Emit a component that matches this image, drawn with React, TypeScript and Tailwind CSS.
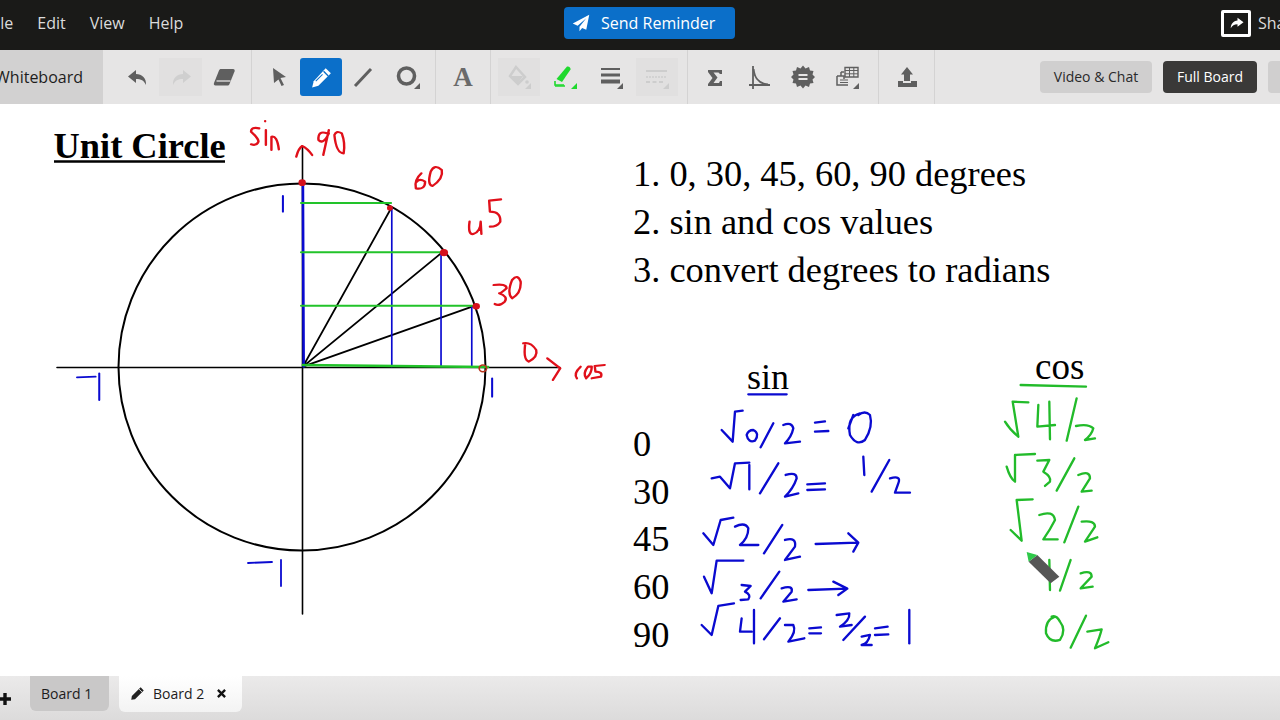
import type { ReactNode } from "react";

const GREY = "#5f5f5f";
const SERIF = "font-['Liberation_Serif',serif]";

function Corner({ color = GREY }: { color?: string }) {
  return <path d="M24 18 L24 24 L18 24 Z" fill={color} />;
}

function Tool({ children, className = "" }: { children: ReactNode; className?: string }) {
  return (
    <div className={`flex h-[38px] shrink-0 items-center justify-center ${className}`}>
      <svg viewBox="0 0 24 24" className="h-6 w-6">
        {children}
      </svg>
    </div>
  );
}

function Toolbar() {
  return (
    <div className="flex h-[54px] shrink-0 items-stretch bg-[#e6e5e5] font-['Open_Sans',sans-serif]">
      <div className="flex w-[103px] shrink-0 items-center justify-end bg-[#d2d1d1] pr-5 text-[16px] text-[#1d1d1d]">
        Whiteboard
      </div>

      <div className="flex w-[148px] shrink-0 items-center pl-[13px]">
        <Tool className="w-[43px]">
          <path d="M10 5 L2 11.5 L10 18 V14 C15 14 18 15.5 20 20 C20.5 13 16 9 10 9 Z" fill={GREY} />
        </Tool>
        <Tool className="w-[43px] bg-[#e1e0e0]">
          <path d="M14 5 L22 11.5 L14 18 V14 C9 14 6 15.5 4 20 C3.5 13 8 9 14 9 Z" fill="#cfcfcf" />
        </Tool>
        <Tool className="w-[43px]">
          <path d="M9 4 H21 C22.5 4 23 5 22.5 6.5 L17.5 19 C17 20 16.5 20.5 15 20.5 H3.5 C2 20.5 1.5 19.5 2 18 L7 5.5 C7.5 4.5 8 4 9 4 Z" fill={GREY} />
          <path d="M4.5 16 H18.5" stroke="#e6e5e5" strokeWidth="1.3" />
        </Tool>
      </div>

      <div className="flex w-[184px] shrink-0 items-center border-l border-[#d4d3d3] pl-[6px]">
        <Tool className="w-[42px]">
          <path d="M6 3 L19 12 L13.5 13 L17 20 L14.5 21 L11.5 14.5 L7 18 Z" fill={GREY} />
        </Tool>
        <div className="flex h-[38px] w-[42px] shrink-0 items-center justify-center rounded-[3px] bg-[#0b6fc9]">
          <svg viewBox="0 0 24 24" className="h-[25px] w-[25px]">
            <path d="M16 3 L21 8 L9 20 L3 21.5 L4.5 15.5 Z" fill="#fff" />
            <path d="M14 6 L18.5 10.5" stroke="#0b6fc9" strokeWidth="1.3" />
            <path d="M6.5 15.5 L13 9" stroke="#0b6fc9" strokeWidth="1" />
          </svg>
        </div>
        <Tool className="w-[42px]">
          <path d="M4 21 L20 4" stroke={GREY} strokeWidth="3" />
        </Tool>
        <Tool className="ml-[3px] w-[42px]">
          <circle cx="10.5" cy="11" r="8" fill="none" stroke={GREY} strokeWidth="3.6" />
          <Corner />
        </Tool>
      </div>

      <div className={`flex w-[55px] shrink-0 items-center justify-center border-l border-[#d4d3d3] ${SERIF} text-[27px] font-bold text-[#6a6a6a]`}>
        A
      </div>

      <div className="flex w-[197px] shrink-0 items-center gap-[4px] border-l border-[#d4d3d3] pl-[7px]">
        <Tool className="w-[42px] bg-[#e1e0e0]">
          <path d="M9 2 L18 12 L11 19 L3 11 Z" fill="none" stroke="#cdcdcd" strokeWidth="2.5" />
          <path d="M4 11 H16 L11 18 Z" fill="#cdcdcd" />
          <circle cx="20" cy="17" r="1.8" fill="#cdcdcd" />
          <Corner color="#cdcdcd" />
        </Tool>
        <Tool className="w-[42px]">
          <path d="M14 1.5 C16 1 18 2.5 17.5 4.5 L9 17 L3.5 14 Z" fill="#1fd92e" />
          <path d="M2 16 V20 H11" fill="none" stroke="#1fd92e" strokeWidth="1.6" />
          <path d="M2 21 H12" stroke="#1fd92e" strokeWidth="1.5" />
          <Corner color="#1fd92e" />
        </Tool>
        <Tool className="w-[42px]">
          <path d="M2 4 H21" stroke={GREY} strokeWidth="2" />
          <path d="M2 10 H21" stroke={GREY} strokeWidth="3" />
          <path d="M2 16.5 H21" stroke={GREY} strokeWidth="4" />
          <Corner />
        </Tool>
        <Tool className="w-[42px] bg-[#e1e0e0]">
          <path d="M1 6 H22" stroke="#cdcdcd" strokeWidth="2" />
          <path d="M1 12 H22" stroke="#cdcdcd" strokeWidth="1.3" strokeDasharray="2 1" />
          <path d="M1 17 H18" stroke="#cdcdcd" strokeWidth="2" strokeDasharray="4 2.5" />
          <Corner color="#cdcdcd" />
        </Tool>
      </div>

      <div className="flex w-[191px] shrink-0 items-center border-l border-[#d4d3d3] pl-[5px]">
        <Tool className="w-[44px]">
          <path d="M5 5 H19 V9 H17 L15.5 7.5 H10.5 L14.5 12.5 L10.5 18 H16 L17 16 H19 V21 H5 V19 L9.5 13 L5 7 Z" fill={GREY} />
        </Tool>
        <Tool className="w-[44px]">
          <path d="M6 1 V24 M2 20 H23" stroke={GREY} strokeWidth="1.8" fill="none" />
          <path d="M6.5 4 C7.5 13 11 18.5 21 19.5" stroke={GREY} strokeWidth="2" fill="none" />
        </Tool>
        <Tool className="w-[44px]">
          <path
            d="M12 0.5 L14.5 3.5 L18 2 L19 5.5 L22.5 6 L21.5 9.5 L24 12 L21.5 14.5 L22.5 18 L19 18.5 L18 22 L14.5 20.5 L12 23.5 L9.5 20.5 L6 22 L5 18.5 L1.5 18 L2.5 14.5 L0 12 L2.5 9.5 L1.5 6 L5 5.5 L6 2 L9.5 3.5 Z"
            fill={GREY}
          />
          <path d="M7.5 10 H16.5 M7.5 14 H16.5" stroke="#e6e5e5" strokeWidth="2" />
        </Tool>
        <Tool className="w-[44px]">
          <path d="M10 2.5 H23 V12 H10 Z" fill="none" stroke={GREY} strokeWidth="1.4" />
          <path d="M10 5.5 H23 M10 8.8 H23 M14.5 2.5 V12 M18.8 2.5 V12" stroke={GREY} strokeWidth="1" />
          <path d="M6 7 H9 M6 7 V11 M2 11 H9 V14 M2 11 V20 H13" fill="none" stroke={GREY} strokeWidth="1.5" />
          <path d="M5 15 H13 M5 17.5 H13" stroke={GREY} strokeWidth="1" />
          <Corner />
        </Tool>
      </div>

      <div className="flex w-[57px] shrink-0 items-center justify-center border-x border-[#d4d3d3]">
        <svg viewBox="0 0 24 24" className="h-6 w-6">
          <path d="M12 2 L18 9.5 H15 V16 H9 V9.5 H6 Z" fill={GREY} />
          <path d="M3 16 H8 V18 H16 V16 H22 V22 H3 Z" fill={GREY} />
        </svg>
      </div>

      <div className="ml-[105px] flex shrink-0 items-center gap-[11px] pb-[1px] text-[14px]">
        <div className="flex h-[32px] w-[112px] items-center justify-center rounded-[4px] bg-[#d0cfcf] text-[#2a2a2a]">
          Video &amp; Chat
        </div>
        <div className="flex h-[32px] w-[94px] items-center justify-center rounded-[4px] bg-[#3a3938] text-white">
          Full Board
        </div>
        <div className="h-[32px] w-[40px] rounded-[4px] bg-[#d0cfcf]" />
      </div>
    </div>
  );
}

function Diagram() {
  return (
    <svg viewBox="0 104 1280 572" className="absolute inset-0 h-full w-full" fill="none" strokeLinecap="round" strokeLinejoin="round">
      <path d="M54 161.5 H225" stroke="#000" strokeWidth="2.6" strokeLinecap="butt" />
      <circle cx="302" cy="367" r="183.5" stroke="#000" strokeWidth="2" />
      <path d="M57 367.5 H560 M302.5 147 V614" stroke="#000" strokeWidth="1.6" />

      {/* top half, drawn in the crop's coordinates */}
      <g transform="translate(40 110) scale(0.3703 0.3333)">
        <path d="M710 770 L948 295 M710 770 L1085 428 M710 770 L1167 590" stroke="#000" strokeWidth="5" />
        <g stroke="#0a0ad0">
          <path d="M710 225 L712 770" strokeWidth="7" />
          <path d="M950 295 V770 M1083 430 V770 M1166 590 V770" strokeWidth="4.5" />
          <path d="M656 258 V305 M100 802 L150 800 M160 790 V870 M1221 805 V860" strokeWidth="5.5" />
        </g>
        <g stroke="#22c32a">
          <path d="M705 279 H948 M705 427 H1083 M705 587 H1167" strokeWidth="6" />
          <path d="M710 765 L1210 771" strokeWidth="7" />
        </g>
        <g fill="#d6101c">
          <circle cx="708" cy="218" r="10" />
          <circle cx="945" cy="294" r="8" />
          <circle cx="1091" cy="428" r="11" />
          <circle cx="1178" cy="589" r="10" />
        </g>
        <circle cx="1196" cy="775" r="10" stroke="#b8341c" strokeWidth="4.5" />
        <g stroke="#e0101a" strokeWidth="6.5">
          <path d="M592 55 Q570 50 570 65 Q590 85 590 95 Q585 108 570 103" />
          <path d="M610 60 V105 M608 33 V34" />
          <path d="M625 120 V80 Q640 75 645 118" />
          <path d="M692 140 Q698 115 708 108 Q722 115 735 135" />
          <path d="M775 70 Q750 60 752 90 Q765 105 780 70 M780 60 L765 135" />
          <path d="M795 75 Q800 130 820 130 Q825 100 815 70 Q800 60 795 75" />
          <path d="M1030 190 Q1010 210 1015 235 Q1040 240 1040 215 Q1025 205 1018 215" />
          <path d="M1055 185 Q1045 225 1060 228 Q1090 205 1085 180 Q1065 160 1055 185" />
          <path d="M1160 335 Q1155 375 1170 372 Q1190 365 1190 335 L1192 372" />
          <path d="M1245 268 L1213 272 L1215 305 Q1245 305 1243 335 Q1235 350 1215 350" />
          <path d="M1225 525 Q1260 520 1260 535 Q1245 550 1240 550 Q1265 560 1255 575 Q1240 590 1228 582" />
          <path d="M1275 510 Q1260 550 1275 565 Q1300 550 1298 515 Q1290 490 1275 510" />
          <path d="M1310 705 Q1305 750 1320 755 Q1345 740 1340 720 Q1325 695 1305 700" />
          <path d="M1370 745 L1405 775 L1385 810" />
          <path d="M1460 770 Q1440 790 1450 805" />
          <path d="M1480 770 Q1465 790 1475 805 Q1490 790 1490 770 Z" />
          <path d="M1525 765 L1498 768 L1500 785 Q1520 785 1515 800 L1490 805" />
        </g>
      </g>

      <path d="M248 563 L272 562 M281 560 V586" stroke="#0a0ad0" strokeWidth="1.8" />

      {/* sin column */}
      <g transform="translate(620 350) scale(0.3333)" stroke="#0a0ad0" strokeWidth="7">
        <path d="M385 133 H500" />
        <path d="M305 240 L338 275 L345 185 L368 182" />
        <path d="M380 255 Q385 280 405 272 Q420 250 400 240 Q385 240 380 255" />
        <path d="M422 292 L460 220" />
        <path d="M490 225 Q515 215 520 235 Q515 260 495 280 L540 275" />
        <path d="M585 218 L615 214 M585 245 L625 243" />
        <path d="M720 190 Q680 200 690 255 Q710 290 735 270 Q760 230 750 195 Q735 180 715 195 M685 235 L700 195" />
        <path d="M275 385 L300 380 L330 415 L345 340 L388 338 M388 345 V418" />
        <path d="M420 430 L475 340" />
        <path d="M497 375 Q530 365 530 385 Q520 415 495 440 L535 430" />
        <path d="M562 403 L615 400 M562 420 L615 418" />
        <path d="M730 320 L733 375 M755 425 L808 330 M810 385 Q845 375 835 400 L825 428 H870" />
        <path d="M250 550 L280 585 L302 510 L340 503" />
        <path d="M345 530 Q375 515 385 535 Q385 565 360 585 H415" />
        <path d="M432 610 L487 525" />
        <path d="M495 570 Q530 560 525 590 L495 630 L540 620" />
        <path d="M587 582 L712 578 M685 550 L715 578 L700 605" />
        <path d="M252 680 L275 730 L290 632 H370" />
        <path d="M365 705 L392 708 L375 725 Q395 735 385 748 L362 750" />
        <path d="M422 745 L478 665" />
        <path d="M485 715 Q520 705 515 725 L490 755 L530 748" />
        <path d="M565 720 L680 716 M640 695 L682 716 L655 735" />
        <path d="M245 825 L275 855 L295 768 L342 760" />
        <path d="M365 805 L360 845 H395 M402 780 V880" />
        <path d="M432 868 L480 805" />
        <path d="M495 825 H520 Q530 845 505 875 L553 865" />
        <path d="M568 835 L603 832 M568 850 H603" />
        <path d="M650 795 L688 790 Q690 810 660 830 L695 825 M670 870 L735 800 M725 860 L750 855 Q745 880 725 885 H755" />
        <path d="M765 835 L803 830 M765 855 L805 853" />
        <path d="M868 780 V880" />
      </g>

      {/* cos column */}
      <g transform="translate(960 350) scale(0.3333)" stroke="#22bb2a" strokeWidth="7">
        <path d="M182 105 L378 110" />
        <path d="M135 215 Q150 240 175 260 L158 155 L205 157" />
        <path d="M235 165 L232 230 L285 225 M268 155 L270 268" />
        <path d="M320 272 L350 145" />
        <path d="M348 228 Q385 220 400 235 Q395 255 375 270 L405 265" />
        <path d="M140 350 Q150 385 165 395 V315 L225 312" />
        <path d="M232 332 L268 330 L250 365 Q275 380 270 395 L255 408" />
        <path d="M290 422 L343 325" />
        <path d="M355 375 Q390 360 390 385 L365 425 L395 422" />
        <path d="M152 540 L185 572 L170 450 L218 448" />
        <path d="M238 495 Q280 480 285 510 Q270 540 250 568 H293" />
        <path d="M313 577 L355 470" />
        <path d="M365 515 Q405 510 405 530 L375 575 L412 562" />
        <path d="M268 630 L270 720" />
        <path d="M300 722 L332 630" />
        <path d="M362 670 Q395 660 395 680 L362 715 L398 710" />
        <path d="M285 800 Q255 810 258 850 Q270 880 300 870 Q320 840 300 815 Q290 795 275 800" />
        <path d="M332 893 L378 797" />
        <path d="M382 845 L425 838 Q420 860 405 895 L445 877" />
        {/* pen cursor */}
        <path d="M232 615 L298 680 L272 700 L206 635 Z" fill="#565656" stroke="none" />
        <path d="M200 606 L232 615 L206 635 Z" fill="#2ec94a" stroke="none" />
      </g>
    </svg>
  );
}

function Printed({ className, children }: { className: string; children: ReactNode }) {
  return <div className={`absolute whitespace-nowrap ${SERIF} text-black ${className}`}>{children}</div>;
}

export default function App() {
  return (
    <div className="flex h-[720px] w-[1280px] flex-col overflow-hidden bg-white">
      <div className="flex h-[50px] shrink-0 items-center bg-[#1a1a18] pb-[4px] font-['Open_Sans',sans-serif] text-[16px] text-[#dcdcdc]">
        <div className="-ml-[12px] flex w-[212px] shrink-0 gap-[24px]">
          <span>File</span>
          <span>Edit</span>
          <span>View</span>
          <span>Help</span>
        </div>
        <div className="ml-[364px] flex h-[32px] w-[171px] shrink-0 items-center gap-[11px] rounded-[4px] bg-[#0b6fc9] pl-[8px] text-white">
          <svg viewBox="0 0 24 24" className="h-[18px] w-[18px]">
            <path d="M23 1 L1 12.5 L7.5 15.5 L19 5.5 L10 17 V23 L13.5 18.5 L19 21 Z" fill="#fff" />
          </svg>
          Send Reminder
        </div>
        <div className="ml-[486px] flex shrink-0 items-center gap-[7px]">
          <div className="flex h-[27px] w-[30px] items-center justify-center rounded-[2px] border-[3px] border-white bg-[#1a1a18]">
            <svg viewBox="0 0 24 24" className="h-[18px] w-[18px]">
              <path d="M14 5 L22 11 L14 17 V13.5 C9.5 13.5 7 15 5 19 C5 13 8.5 9 14 8.5 Z" fill="#fff" />
            </svg>
          </div>
          <span>Share</span>
        </div>
      </div>

      <Toolbar />

      <div className="relative flex-1">
        <Diagram />
        <Printed className="left-[53.5px] top-[15px] text-[36.4px] font-bold">Unit Circle</Printed>
        <div className={`absolute left-[633px] top-[46px] text-[36.4px] leading-[48px] text-black ${SERIF}`}>
          <div>1. 0, 30, 45, 60, 90 degrees</div>
          <div>2. sin and cos values</div>
          <div>3. convert degrees to radians</div>
        </div>
        <Printed className="left-[747px] top-[246px] text-[36px]">sin</Printed>
        <Printed className="left-[1035px] top-[235px] text-[37px]">cos</Printed>
        <div className={`absolute left-[633px] top-[317px] text-[36.4px] leading-[47.7px] text-black ${SERIF}`}>
          <div>0</div>
          <div>30</div>
          <div>45</div>
          <div>60</div>
          <div>90</div>
        </div>
      </div>

      <div className="flex h-[44px] shrink-0 items-start bg-gradient-to-b from-[#ebeaea] to-[#dcdbdb] font-['Open_Sans',sans-serif] text-[14px] text-[#1c1c1c]">
        <svg viewBox="0 0 12 12" className="mt-[17px] h-3 w-3 shrink-0 -ml-[1px]">
          <path d="M0 6 H12 M6 0 V12" stroke="#111" strokeWidth="3.4" />
        </svg>
        <div className="ml-[19px] flex h-[35px] w-[79px] shrink-0 items-center rounded-b-[6px] bg-[#c9c8c8] pb-[1px] pl-[11px]">Board 1</div>
        <div className="ml-[10px] flex h-[36px] w-[123px] shrink-0 items-center rounded-b-[6px] bg-gradient-to-b from-white to-[#f3f3f3] pb-[1px] pl-[11px]">
          <svg viewBox="0 0 24 24" className="h-[15px] w-[15px]">
            <path d="M17 2 L22 7 L8 21 L2 22 L3 16 Z" fill="#222" />
            <path d="M14.5 5 L19 9.5" stroke="#fff" strokeWidth="1.3" />
          </svg>
          <span className="ml-[8px]">Board 2</span>
          <svg viewBox="0 0 10 10" className="ml-[13px] h-[9px] w-[9px]">
            <path d="M1 1 L9 9 M9 1 L1 9" stroke="#111" strokeWidth="2.6" />
          </svg>
        </div>
      </div>
    </div>
  );
}
